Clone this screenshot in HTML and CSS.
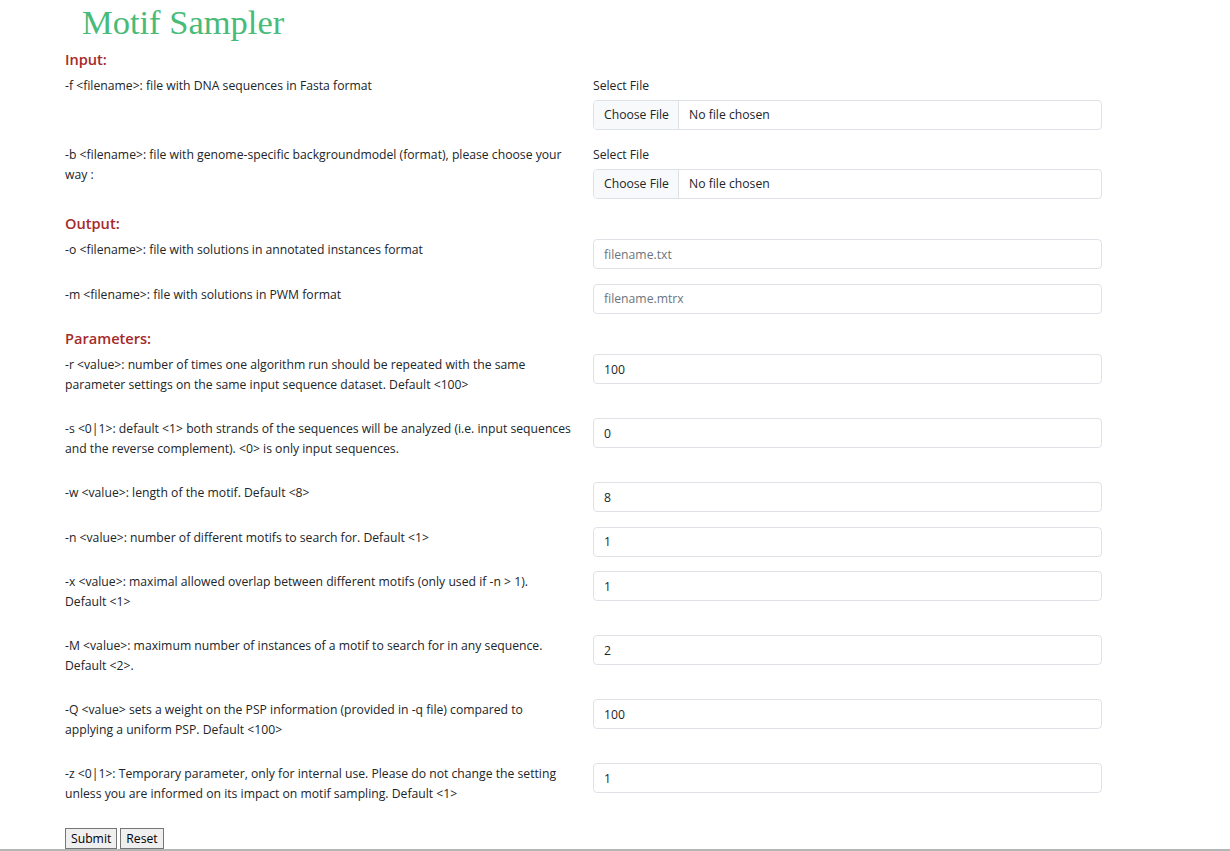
FILE: index.html
```html
<!DOCTYPE html>
<html lang="en">
<head>
<meta charset="utf-8">
<title>Motif Sampler</title>
<link rel="stylesheet" href="styles.css">
</head>
<body>
<h1 class="title">Motif Sampler</h1>
<form class="form">
  <h2 class="section">Input:</h2>
  <div class="row">
    <div class="label">-f &lt;filename&gt;: file with DNA sequences in Fasta format</div>
    <div class="field">
      <div class="field-label">Select File</div>
      <div class="file"><span class="file-btn">Choose File</span><span class="file-name">No file chosen</span></div>
    </div>
  </div>
  <div class="row">
    <div class="label">-b &lt;filename&gt;: file with genome-specific backgroundmodel (format), please choose your way :</div>
    <div class="field">
      <div class="field-label">Select File</div>
      <div class="file"><span class="file-btn">Choose File</span><span class="file-name">No file chosen</span></div>
    </div>
  </div>

  <h2 class="section">Output:</h2>
  <div class="row">
    <div class="label">-o &lt;filename&gt;: file with solutions in annotated instances format</div>
    <div class="field"><input class="input" type="text" placeholder="filename.txt"></div>
  </div>
  <div class="row">
    <div class="label">-m &lt;filename&gt;: file with solutions in PWM format</div>
    <div class="field"><input class="input" type="text" placeholder="filename.mtrx"></div>
  </div>

  <h2 class="section">Parameters:</h2>
  <div class="row">
    <div class="label">-r &lt;value&gt;: number of times one algorithm run should be repeated with the same parameter settings on the same input sequence dataset. Default &lt;100&gt;</div>
    <div class="field"><input class="input" type="text" value="100"></div>
  </div>
  <div class="row">
    <div class="label">-s &lt;0|1&gt;: default &lt;1&gt; both strands of the sequences will be analyzed (i.e. input sequences and the reverse complement). &lt;0&gt; is only input sequences.</div>
    <div class="field"><input class="input" type="text" value="0"></div>
  </div>
  <div class="row">
    <div class="label">-w &lt;value&gt;: length of the motif. Default &lt;8&gt;</div>
    <div class="field"><input class="input" type="text" value="8"></div>
  </div>
  <div class="row">
    <div class="label">-n &lt;value&gt;: number of different motifs to search for. Default &lt;1&gt;</div>
    <div class="field"><input class="input" type="text" value="1"></div>
  </div>
  <div class="row">
    <div class="label">-x &lt;value&gt;: maximal allowed overlap between different motifs (only used if -n &gt; 1).<br>Default &lt;1&gt;</div>
    <div class="field"><input class="input" type="text" value="1"></div>
  </div>
  <div class="row">
    <div class="label">-M &lt;value&gt;: maximum number of instances of a motif to search for in any sequence.<br>Default &lt;2&gt;.</div>
    <div class="field"><input class="input" type="text" value="2"></div>
  </div>
  <div class="row">
    <div class="label">-Q &lt;value&gt; sets a weight on the PSP information (provided in -q file) compared to<br>applying a uniform PSP. Default &lt;100&gt;</div>
    <div class="field"><input class="input" type="text" value="100"></div>
  </div>
  <div class="row">
    <div class="label">-z &lt;0|1&gt;: Temporary parameter, only for internal use. Please do not change the setting<br>unless you are informed on its impact on motif sampling. Default &lt;1&gt;</div>
    <div class="field"><input class="input" type="text" value="1"></div>
  </div>

  <div class="buttons">
    <button type="submit" class="btn">Submit</button>
    <button type="reset" class="btn">Reset</button>
  </div>
</form>
<div class="footer-line"></div>
</body>
</html>
```

FILE: styles.css
```css
html, body {
  margin: 0;
  padding: 0;
  background: #ffffff;
}

body {
  font-family: "Open Sans", "Noto Sans", sans-serif;
  font-size: 12.2px;
  color: #212529;
}

.title {
  margin: 0 0 5px 0;
  padding-left: 82px;
  font-family: "Liberation Serif", serif;
  font-weight: normal;
  font-size: 34.5px;
  line-height: 44px;
  color: #48bb78;
}

.form {
  padding-left: 65px;
  width: 1037px;
}

.section {
  margin: 0 0 6px 0;
  font-size: 14.6px;
  line-height: 20px;
  font-weight: 600;
  color: #a52a2a;
}

.row {
  display: grid;
  grid-template-columns: 513px 509px;
  column-gap: 15px;
  align-items: start;
}

.label {
  line-height: 19.5px;
  padding-top: 1px;
  padding-bottom: 24px;
}

.field {
  padding-bottom: 14.5px;
}

.field-label {
  line-height: 19.5px;
  padding-top: 1px;
  margin-bottom: 4px;
}

.file {
  display: flex;
  height: 28px;
  border: 1px solid #dee2e6;
  border-radius: 4px;
  overflow: hidden;
  line-height: 28px;
}

.file-btn {
  width: 85px;
  box-sizing: border-box;
  padding-left: 10px;
  background: #f8f9fa;
  border-right: 1px solid #dee2e6;
}

.file-name {
  padding-left: 10px;
}

.input {
  display: block;
  box-sizing: border-box;
  width: 100%;
  height: 30px;
  margin: 0;
  padding: 0 10px;
  border: 1px solid #dee2e6;
  border-radius: 4px;
  font-family: inherit;
  font-size: 12.2px;
  color: #212529;
  background: #fff;
}

.input::placeholder {
  color: #6c757d;
}

.buttons {
  display: flex;
  gap: 3px;
  padding-top: 1px;
}

.btn {
  font-family: inherit;
  font-size: 12.2px;
  height: 21px;
  padding: 0 5px;
  background: #efefef;
  border: 1px solid #767676;
  border-radius: 0;
  color: #000;
}

.footer-line {
  height: 2px;
  background: #b3b6b9;
}
```
